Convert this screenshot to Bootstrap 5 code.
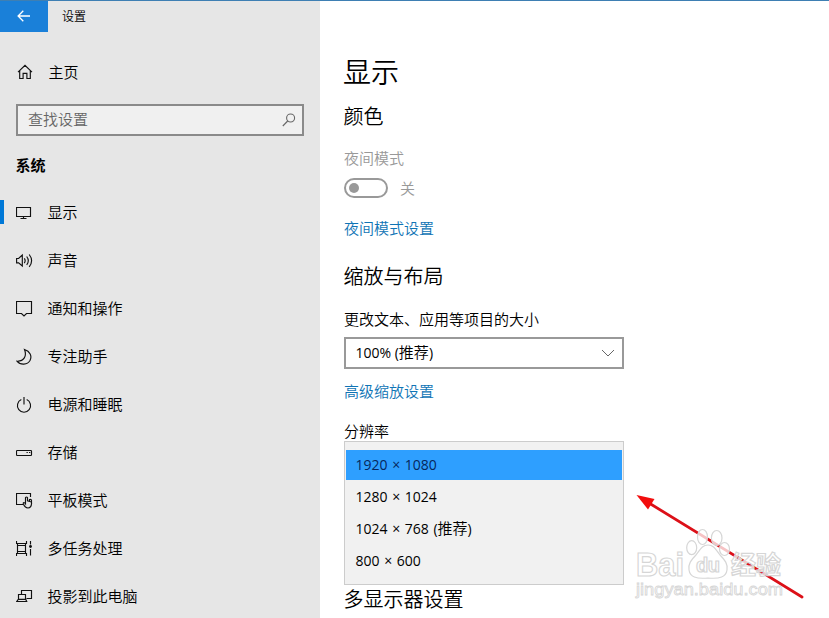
<!DOCTYPE html>
<html lang="zh-CN">
<head>
<meta charset="utf-8">
<title>设置</title>
<link href="https://cdn.jsdelivr.net/npm/bootstrap@5.3.0/dist/css/bootstrap.min.css" rel="stylesheet">
<style>
body{font-family:"Noto Sans CJK SC",sans-serif;font-size:15px;font-weight:350;line-height:20px;color:#000;background:#fff;height:618px}
.win{height:618px;border-top:1px solid #3e7fb3}
.side{width:320px;background:#e6e6e6}
.back{width:48px;height:31px;background:#1a80d9}
.back svg{margin-bottom:2px}
.cap{font-size:12px;padding:0 0 1px 14px}
.home{height:48px;margin-top:16px;padding-left:16px;gap:14.500px}
.find{height:32px;margin:8px 16px 0;border:2px solid #8a8a8a;background:#f0f0f0;color:#666;padding:0 6px 0 10px}
.find span{padding-bottom:2px}
.sys{margin:19px 0 0 15.500px;height:20px}
.menu{margin-top:14px}
.item{height:48px;padding-left:16px;gap:13.500px;color:#000;text-decoration:none;position:relative}
.item span{padding-bottom:2px}
.item svg{margin-bottom:1px}
.item.on::before{content:"";position:absolute;left:0;top:11px;width:4px;height:24px;background:#0078d7}
svg.ic{width:18px;height:18px;fill:none;stroke:#111;stroke-width:1.15;flex:none}
.pane{padding:50px 0 0 24px;min-width:0}
h1{font-size:28px;line-height:40px;font-weight:350;margin:0 0 11px -1px}
h2{font-size:20px;line-height:28px;font-weight:350;margin:0 0 0 -.500px}
.muted{color:#999}
.night{margin-top:18px}
.night-row{margin-top:10px;gap:12px}
.night-link{margin-top:20px}
.zoom-head{margin-top:24px}
.zoom-label{margin-top:19px}
.zoom-link{margin-top:12px}
.res-label{margin-top:20px}
.tog{width:44px;height:20px;border:2px solid #999;border-radius:10px;padding-left:3px}
.tog i{width:10px;height:10px;border-radius:50%;background:#999}
.lnk{color:#0f74b5;text-decoration:none}
.pick{width:280px;height:32px;margin-top:8px;border:2px solid #999;padding:0 7px 0 9.500px}
.pick>span{padding-bottom:2px}
.en{font-family:"Open Sans","Noto Sans CJK SC",sans-serif;font-size:14px;font-weight:400}
.opts{width:280px;height:144px;border:1px solid #ccc;background:#f1f1f1;padding:8px 1px 0}
.opt{height:30px;margin-bottom:2px;padding:0 0 1px 9.500px}
.opt .en{word-spacing:1px}
.opt.sel{background:#2e9fff;color:#06275c}
.mark-layer{position:absolute;left:0;top:0;pointer-events:none}
</style>
<script src="https://cdn.jsdelivr.net/npm/bootstrap@5.3.0/dist/js/bootstrap.bundle.min.js"></script>
</head>
<body class="overflow-hidden position-relative">
<div class="win d-flex">
<aside class="side flex-shrink-0 overflow-hidden">
  <div class="d-flex align-items-center">
    <div class="back d-flex align-items-center justify-content-center"><svg width="14" height="12" viewBox="0 0 14 12" fill="none" stroke="#fff" stroke-width="1.3"><path d="M13 6H1M6.3.8 1.1 6l5.2 5.2"/></svg></div>
    <div class="cap">设置</div>
  </div>
  <div class="home d-flex align-items-center">
    <svg class="ic" viewBox="0 0 18 18"><path d="M2 9.2 9 2.4l7 6.8M3.7 7.8v7.7h3.4v-5.1h3.8v5.1h3.4V7.8"/></svg><span>主页</span>
  </div>
  <div class="find d-flex align-items-center justify-content-between"><span>查找设置</span>
    <svg width="14" height="14" viewBox="0 0 14 14" fill="none" stroke="#666" stroke-width="1.1"><circle cx="8.6" cy="5" r="4"/><path d="M5.7 8 .8 13"/></svg></div>
  <div class="sys fw-bold">系统</div>
  <nav class="menu">
    <a class="item on d-flex align-items-center"><svg class="ic" viewBox="0 0 18 18"><path d="M.5 3.5h14v9H.5zM7.5 12.5v2M4.5 14.5h6"/></svg><span>显示</span></a>
    <a class="item d-flex align-items-center"><svg class="ic" viewBox="0 0 18 18"><path d="M.6 6.5h2L6.3 3v11L2.6 10.8h-2zM8.3 6.3q1.7 2.4 0 4.800M10.7 4.500q3.200 4.200 0 8.400M13.200 2.500q4.800 6.200 0 12.400"/></svg><span>声音</span></a>
    <a class="item d-flex align-items-center"><svg class="ic" viewBox="0 0 18 18"><path d="M.5 1.5h15v12h-5L8 16l-2.500-2.500h-5z"/></svg><span>通知和操作</span></a>
    <a class="item d-flex align-items-center"><svg class="ic" viewBox="0 0 18 18"><path d="M8.500 1.500C14 3.200 16.300 8 14 12.500 11.500 17 4.500 17.500 1 13.200 8 13.500 11 8 8.500 1.500z"/></svg><span>专注助手</span></a>
    <a class="item d-flex align-items-center"><svg class="ic" viewBox="0 0 18 18"><path d="M5.300 3.600a6.600 6.600 0 1 0 5.400 0M8 1v7.500"/></svg><span>电源和睡眠</span></a>
    <a class="item d-flex align-items-center"><svg class="ic" viewBox="0 0 18 18"><rect x=".5" y="6.500" width="15" height="5" rx=".7"/><path d="M10.500 8.500h1.300M13 8.500h1.300"/></svg><span>存储</span></a>
    <a class="item d-flex align-items-center"><svg class="ic" viewBox="0 0 18 18"><path d="M7 12.500H.5v-11h14v3.500M7 11q1.300-1 2.500.8V5.700q1-1.400 2 0v3.200l3.200.8q1 .3.900 1.400c-.2 3-1.200 4.900-3.600 4.900-2.300 0-3.900-2-5-5M13.500 9.300V7.500q1.800-.6 2 1v3"/></svg><span>平板模式</span></a>
    <a class="item d-flex align-items-center"><svg class="ic" viewBox="0 0 18 18"><path d="M.5 1v2.500h10V1M.5 16v-2.500h10V16M1.500 3.500v10M9.500 3.500v10M1.500 5.500h8M1.500 11.500h8M14.500 1v3.500M14.500 9v6.500"/><circle cx="14.500" cy="6.500" r="1.400" fill="#111" stroke="none"/></svg><span>多任务处理</span></a>
    <a class="item d-flex align-items-center"><svg class="ic" viewBox="0 0 18 18"><path d="M5.500 6.500v-4h10v8h-5M2.500 6.500h7v4.800h-7zM2.300 11.300.7 13.500h10l-1-2.200"/></svg><span>投影到此电脑</span></a>
  </nav>
</aside>
<main class="pane flex-grow-1 overflow-hidden">
  <h1>显示</h1>
  <h2>颜色</h2>
  <div class="muted night">夜间模式</div>
  <div class="night-row d-flex align-items-center muted"><div class="tog d-flex align-items-center"><i></i></div><span>关</span></div>
  <a class="lnk night-link d-block">夜间模式设置</a>
  <h2 class="zoom-head">缩放与布局</h2>
  <div class="zoom-label">更改文本、应用等项目的大小</div>
  <div class="pick d-flex align-items-center justify-content-between"><span><span class="en">100% (</span>推荐<span class="en">)</span></span>
    <svg width="14" height="8" viewBox="0 0 14 8" fill="none" stroke="#666" stroke-width="1"><path d="m1 1 6 6 6-6"/></svg></div>
  <a class="lnk zoom-link d-block">高级缩放设置</a>
  <div class="res-label">分辨率</div>
  <div class="opts">
    <div class="opt sel d-flex align-items-center"><span class="en">1920 × 1080</span></div>
    <div class="opt d-flex align-items-center"><span class="en">1280 × 1024</span></div>
    <div class="opt d-flex align-items-center"><span><span class="en">1024 × 768 (</span>推荐<span class="en">)</span></span></div>
    <div class="opt d-flex align-items-center"><span class="en">800 × 600</span></div>
  </div>
  <h2>多显示器设置</h2>
</main>
</div>
<svg class="mark-layer" width="829" height="618" viewBox="0 0 829 618">
  <path d="M649 503 802 597" stroke="#dc1018" stroke-width="2.800" stroke-linecap="round"/>
  <path d="M636.500 495 654.500 499 648 509.500z" fill="#f20d0d"/>
  <g fill="#fff" fill-opacity=".75" stroke="#d6d6d6" stroke-width="1.200" font-family="Liberation Sans, sans-serif">
    <ellipse cx="691.700" cy="547.700" rx="5" ry="7"/><ellipse cx="702.500" cy="537" rx="5" ry="7.500"/><ellipse cx="716.700" cy="538" rx="5.300" ry="7.500"/><ellipse cx="724.500" cy="549" rx="5" ry="6.500"/>
    <path d="M708 545c6 0 8 5 12 10 5 5 8 9 7 15-1 7-7 9-19 8-12 1-18-1-19-8-1-6 2-10 7-15 4-5 6-10 12-10z"/>
    <text x="636" y="575.500" font-size="34" font-weight="bold" textLength="48" lengthAdjust="spacingAndGlyphs">Bai</text>
    <text x="696" y="572" font-size="20" font-weight="bold" textLength="24">du</text>
    <text x="731" y="573.500" font-size="25" font-weight="bold" font-family="Noto Sans CJK SC, sans-serif">经验</text>
    <text x="636" y="594.500" font-size="16.500" stroke-width=".8" textLength="147" lengthAdjust="spacingAndGlyphs">jingyan.baidu.com</text>
  </g>
</svg>
</body>
</html>
